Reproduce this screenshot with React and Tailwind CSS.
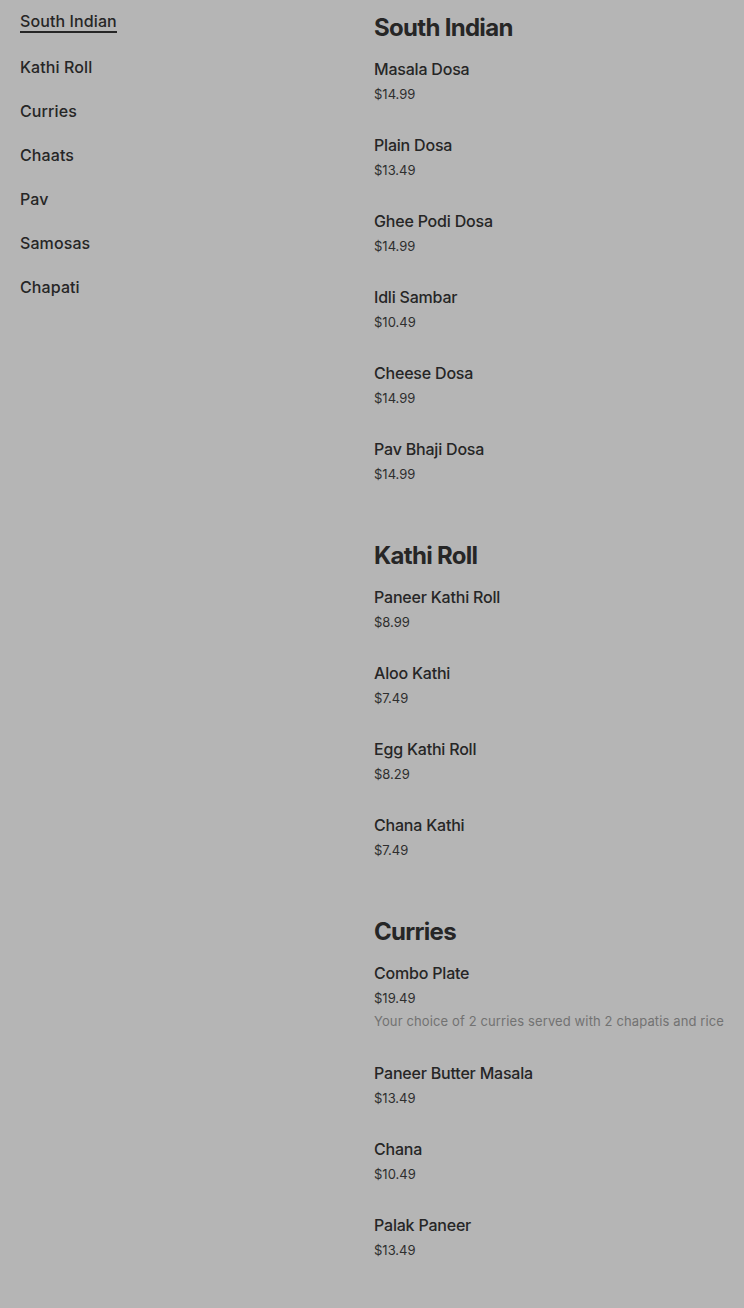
const menu = [
  {
    title: "South Indian",
    items: [
      { name: "Masala Dosa", price: "$14.99" },
      { name: "Plain Dosa", price: "$13.49" },
      { name: "Ghee Podi Dosa", price: "$14.99" },
      { name: "Idli Sambar", price: "$10.49" },
      { name: "Cheese Dosa", price: "$14.99" },
      { name: "Pav Bhaji Dosa", price: "$14.99" },
    ],
  },
  {
    title: "Kathi Roll",
    items: [
      { name: "Paneer Kathi Roll", price: "$8.99" },
      { name: "Aloo Kathi", price: "$7.49" },
      { name: "Egg Kathi Roll", price: "$8.29" },
      { name: "Chana Kathi", price: "$7.49" },
    ],
  },
  {
    title: "Curries",
    items: [
      {
        name: "Combo Plate",
        price: "$19.49",
        desc: "Your choice of 2 curries served with 2 chapatis and rice",
      },
      { name: "Paneer Butter Masala", price: "$13.49" },
      { name: "Chana", price: "$10.49" },
      { name: "Palak Paneer", price: "$13.49" },
    ],
  },
];

const categories = [
  "South Indian",
  "Kathi Roll",
  "Curries",
  "Chaats",
  "Pav",
  "Samosas",
  "Chapati",
];

export default function App() {
  return (
    <main
      className="min-h-[1308px] bg-[#b5b5b5] text-[#262626] flex overflow-hidden"
      style={{ fontFamily: "Inter, 'Liberation Sans', sans-serif" }}
    >
      {/* NAV */}
      <nav className="w-[374px] shrink-0 pl-5 pt-[11px]">
        <ul className="flex flex-col gap-6">
          {categories.map((c, i) => (
            <li key={c} className="text-base leading-5 font-medium tracking-[0.1px]">
              <span className={i === 0 ? "border-b-2 border-[#262626] inline-block" : "inline-block"}>
                {c}
              </span>
            </li>
          ))}
        </ul>
      </nav>

      {/* MENU */}
      <div className="flex-1 pt-3 flex flex-col gap-[27px]">
        {menu.map((section) => (
          <section key={section.title}>
            <h2 className="text-2xl leading-8 font-bold tracking-[-0.7px] mb-[13px]">
              {section.title}
            </h2>
            {section.items.map((item) => (
              <div key={item.name} className="pb-[29px]">
                <p className="text-base leading-6 font-medium tracking-[-0.2px]">{item.name}</p>
                <p className="text-[13px] leading-5 mt-[3px] text-[#2e2e2e]">{item.price}</p>
                {item.desc && (
                  <p className="text-[13px] leading-[21px] mt-[3px] tracking-[0.12px] text-[#727272]">{item.desc}</p>
                )}
              </div>
            ))}
          </section>
        ))}
      </div>
    </main>
  );
}
